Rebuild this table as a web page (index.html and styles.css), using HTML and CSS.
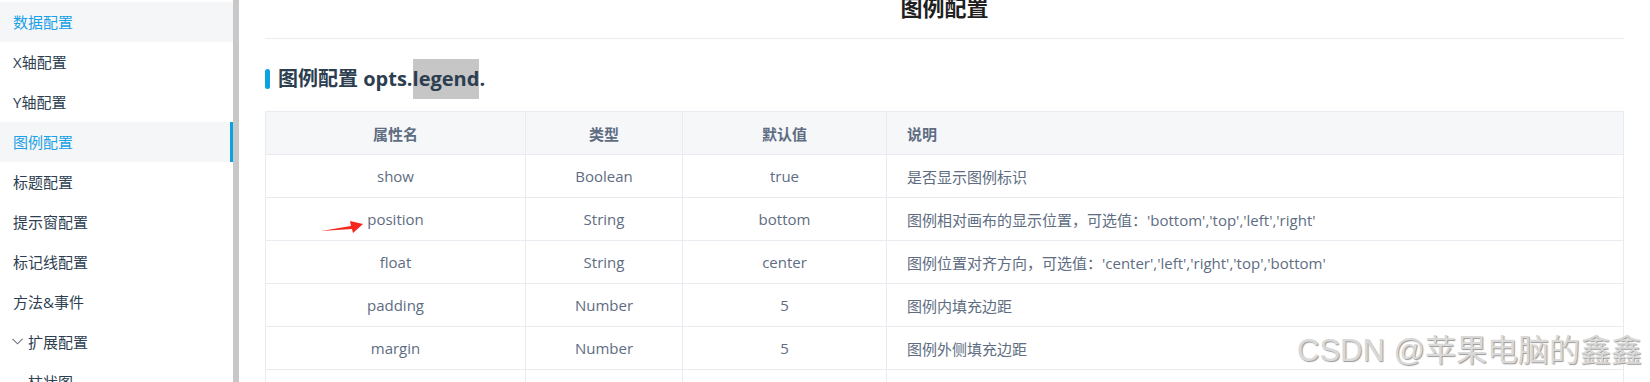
FILE: index.html
```html
<!DOCTYPE html>
<html lang="zh">
<head>
<meta charset="utf-8">
<title>图例配置</title>
<link rel="stylesheet" href="styles.css">
</head>
<body>
<div class="page">
  <aside class="sidebar">
    <ul class="nav">
      <li class="nav-item hover">数据配置</li>
      <li class="nav-item">X轴配置</li>
      <li class="nav-item">Y轴配置</li>
      <li class="nav-item active">图例配置</li>
      <li class="nav-item">标题配置</li>
      <li class="nav-item">提示窗配置</li>
      <li class="nav-item">标记线配置</li>
      <li class="nav-item">方法&amp;事件</li>
      <li class="nav-item group"><svg class="chev" width="11" height="7" viewBox="0 0 11 7"><path d="M0.5 0.8 L5.5 5.8 L10.5 0.8" fill="none" stroke="#6b7280" stroke-width="1.1"/></svg>扩展配置</li>
      <li class="nav-item sub">柱状图</li>
    </ul>
  </aside>
  <div class="scrollbar"></div>
  <main class="content">
    <header class="page-head">
      <h1 class="page-title">图例配置</h1>
    </header>
    <h2 class="section-title"><span class="mark"></span>图例配置 opts.<span class="sel">legend</span>.</h2>
    <table class="props">
      <colgroup>
        <col class="c1"><col class="c2"><col class="c3"><col class="c4">
      </colgroup>
      <thead>
        <tr><th>属性名</th><th>类型</th><th>默认值</th><th class="left">说明</th></tr>
      </thead>
      <tbody>
        <tr><td>show</td><td>Boolean</td><td>true</td><td class="left">是否显示图例标识</td></tr>
        <tr><td>position</td><td>String</td><td>bottom</td><td class="left">图例相对画布的显示位置，可选值：'bottom','top','left','right'</td></tr>
        <tr><td>float</td><td>String</td><td>center</td><td class="left">图例位置对齐方向，可选值：'center','left','right','top','bottom'</td></tr>
        <tr><td>padding</td><td>Number</td><td>5</td><td class="left">图例内填充边距</td></tr>
        <tr><td>margin</td><td>Number</td><td>5</td><td class="left">图例外侧填充边距</td></tr>
        <tr><td>backgroundColor</td><td>String</td><td>rgba(0,0,0,0)</td><td class="left">图例背景颜色</td></tr>
      </tbody>
    </table>
  </main>
  <svg class="arrow" width="48" height="18" viewBox="0 0 48 18"><polygon points="3,13 33,8 32,3 45,6 35,15 34,11" fill="#f5261b"/></svg>
  <div class="watermark">CSDN @苹果电脑的鑫鑫</div>
</div>
</body>
</html>
```

FILE: styles.css
```css
html, body {
  margin: 0;
  padding: 0;
  background: #fff;
  overflow: hidden;
}
body {
  font-family: "Open Sans", "Noto Sans CJK SC", sans-serif;
  color: #2c3e50;
}
.page {
  position: relative;
  display: flex;
  width: 1650px;
  height: 382px;
  overflow: hidden;
}
.sidebar {
  width: 233px;
  flex: none;
  padding-top: 2px;
  box-sizing: border-box;
}
.nav {
  list-style: none;
  margin: 0;
  padding: 0;
}
.nav-item {
  height: 40px;
  line-height: 40px;
  padding-left: 13px;
  font-size: 15px;
  color: #2c3e50;
  box-sizing: border-box;
  border-right: 3px solid transparent;
  white-space: nowrap;
}
.nav-item.hover {
  background: #f5f6f8;
  color: #1aa1e6;
}
.nav-item.active {
  background: #f5f6f8;
  color: #1aa1e6;
  border-right-color: #0aa2e3;
}
.nav-item.group {
  display: flex;
  align-items: center;
  gap: 5px;
  padding-left: 12px;
}
.chev {
  margin-top: -2px;
}
.nav-item.sub {
  padding-left: 28px;
}
.scrollbar {
  width: 6px;
  flex: none;
  background: #c8c8c8;
}
.content {
  flex: 1;
  padding: 0 26px;
  min-width: 0;
}
.page-head {
  display: flex;
  justify-content: center;
  align-items: flex-start;
  height: 39px;
  border-bottom: 1px solid #eaecef;
  box-sizing: border-box;
}
.page-title {
  margin: -4px 0 0;
  font-size: 22px;
  line-height: 22px;
  font-weight: 700;
  color: #1f1f1f;
}
.section-title {
  margin: 20px 0 12px;
  height: 40px;
  line-height: 40px;
  font-size: 20px;
  font-weight: 700;
  color: #2c3e50;
  display: flex;
  align-items: center;
  white-space: pre;
}
.mark {
  width: 5px;
  height: 20px;
  border-radius: 3px;
  background: #0aa2e3;
  margin-right: 8px;
  flex: none;
}
.sel {
  background: #c6c6c6;
  height: 40px;
  display: inline-block;
}
.props {
  width: 100%;
  border-collapse: collapse;
  table-layout: fixed;
  font-size: 15px;
  color: #5e6d82;
}
.c1 { width: 260px; }
.c2 { width: 157px; }
.c3 { width: 204px; }
.props th, .props td {
  border: 1px solid #eaebf0;
  height: 43px;
  padding: 0 20px;
  box-sizing: border-box;
  text-align: center;
  white-space: nowrap;
}
.props th {
  background: #f6f7f9;
  font-weight: 600;
  color: #5e6d82;
}
.props .left {
  text-align: left;
}
.arrow {
  position: absolute;
  left: 318px;
  top: 218px;
}
.watermark {
  position: absolute;
  left: 1297px;
  top: 331px;
  font-family: "Liberation Sans", "Noto Sans CJK SC", sans-serif;
  font-size: 31px;
  line-height: 40px;
  color: #d9d9d9;
  text-shadow: 1px 1px 1px #9a9a9a;
  white-space: nowrap;
}
```
